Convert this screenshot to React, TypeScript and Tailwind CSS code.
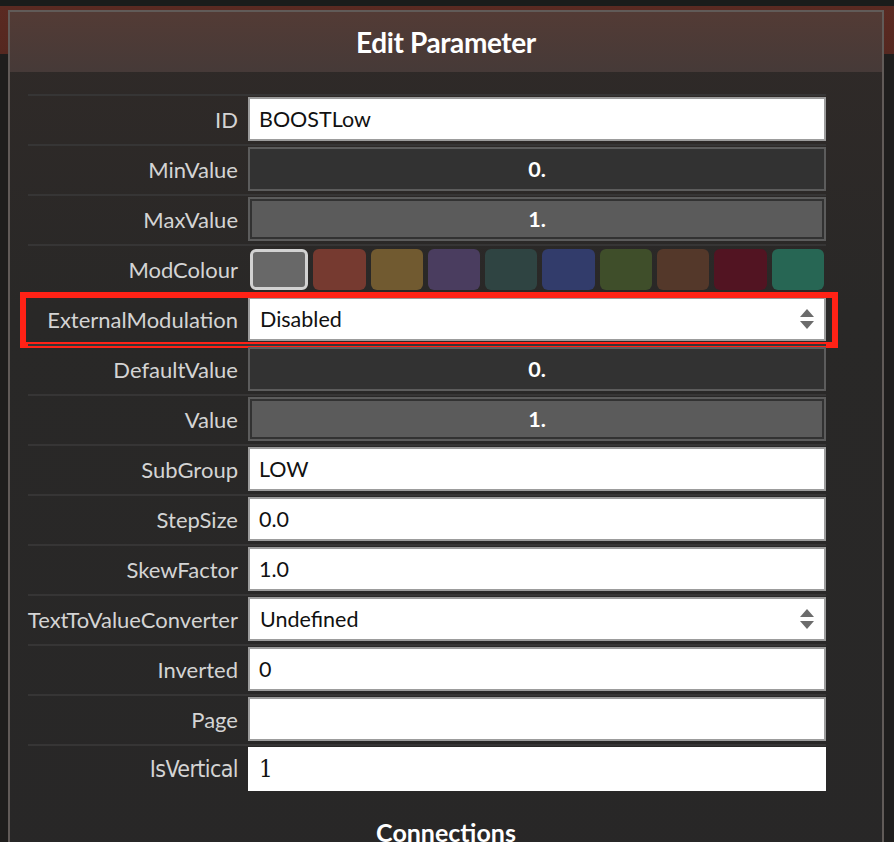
import React from 'react';

type Row =
  | { label: string; kind: 'text'; value: string; plain?: boolean }
  | { label: string; kind: 'slider'; value: string; filled: boolean }
  | { label: string; kind: 'colours' }
  | { label: string; kind: 'select'; value: string; marked?: boolean };

const ROWS: Row[] = [
  { label: 'ID', kind: 'text', value: 'BOOSTLow' },
  { label: 'MinValue', kind: 'slider', value: '0.', filled: false },
  { label: 'MaxValue', kind: 'slider', value: '1.', filled: true },
  { label: 'ModColour', kind: 'colours' },
  { label: 'ExternalModulation', kind: 'select', value: 'Disabled', marked: true },
  { label: 'DefaultValue', kind: 'slider', value: '0.', filled: false },
  { label: 'Value', kind: 'slider', value: '1.', filled: true },
  { label: 'SubGroup', kind: 'text', value: 'LOW' },
  { label: 'StepSize', kind: 'text', value: '0.0' },
  { label: 'SkewFactor', kind: 'text', value: '1.0' },
  { label: 'TextToValueConverter', kind: 'select', value: 'Undefined' },
  { label: 'Inverted', kind: 'text', value: '0' },
  { label: 'Page', kind: 'text', value: '' },
  { label: 'IsVertical', kind: 'text', value: '1', plain: true },
];

const SWATCHES = [
  'bg-[#686868]',
  'bg-[#763a30]',
  'bg-[#715a30]',
  'bg-[#4a3d5f]',
  'bg-[#2f4442]',
  'bg-[#323c6b]',
  'bg-[#3f4e2a]',
  'bg-[#54382a]',
  'bg-[#521422]',
  'bg-[#276654]',
];

function Arrows() {
  return (
    <svg width="16" height="22" viewBox="0 0 16 22" className="shrink-0">
      <polygon points="8,1 15,9 1,9" fill="#6b6b6b" />
      <polygon points="1,13 15,13 8,21" fill="#6b6b6b" />
    </svg>
  );
}

function Field({ row }: { row: Row }) {
  if (row.kind === 'text') {
    return (
      <div
        className={`flex h-[44px] flex-1 items-center bg-white pl-[9px] text-[21.5px] text-[#111] ${
          row.plain ? '' : 'border-2 border-[#9c9c9c]'
        }`}
      >
        {row.plain ? (
          <span className="pl-[2px] font-['DejaVu_Serif_Condensed','DejaVu_Serif',serif] text-[24px]">{row.value}</span>
        ) : (
          row.value
        )}
      </div>
    );
  }
  if (row.kind === 'slider') {
    return (
      <div className="flex h-[44px] flex-1 border-2 border-[#5c5c5c] bg-[#323232] p-[2px]">
        <div
          className={`flex flex-1 items-center justify-center text-[21.5px] font-bold text-white ${
            row.filled ? 'bg-[#5b5b5b]' : ''
          }`}
        >
          {row.value}
        </div>
      </div>
    );
  }
  if (row.kind === 'colours') {
    return (
      <div className="flex h-[44px] flex-1 items-center gap-[5px] px-[2px]">
        {SWATCHES.map((c, i) => (
          <div
            key={c}
            className={`h-[41px] flex-1 rounded-[6px] ${c} ${i === 0 ? 'border-[3px] border-[#d2d2d2]' : ''}`}
          />
        ))}
      </div>
    );
  }
  return (
    <div className="flex h-[44px] flex-1 items-center justify-between border-2 border-[#9c9c9c] bg-white pl-[10px] pr-[9px] text-[21.5px] text-[#111]">
      <span>{row.value}</span>
      <Arrows />
    </div>
  );
}

export default function App() {
  return (
    <div className="h-[842px] w-[894px] overflow-hidden bg-[linear-gradient(to_bottom,#1a1c1b_0,#1a1c1b_6px,#5a2a22_6px,#552820_54px,#1f1e1d_54px)] pl-[8px] pt-[10px] font-['Lato','Noto_Sans',sans-serif]">
      <div className="h-[900px] w-[876px] border-2 border-b-0 border-[#615b58] bg-[linear-gradient(to_bottom,#302a28,#292827_300px,#282727)]">
        <div className="flex h-[60px] items-center justify-center bg-[linear-gradient(to_bottom,#533b35,#463a38)]">
          <h1 className="text-[28px] font-bold tracking-[-0.4px] text-white">Edit Parameter</h1>
        </div>

        <div className="pl-[18px] pt-[22px]">
          {ROWS.map((row) => (
            <div key={row.label} className="relative flex h-[50px] w-[798px] items-start border-t-2 border-[#363535] pt-[1px]">
              {row.kind === 'select' && row.marked && (
                <div className="pointer-events-none absolute left-[-8px] top-[-4px] h-[56px] w-[818px] border-[6px] border-[#ff2216]" />
              )}
              <div className="flex h-[44px] w-[220px] shrink-0 items-center justify-end pr-[10px] text-[22px] text-[#d4d4d4]">
                {row.label === 'IsVertical' ? (
                  <span className="font-['DejaVu_Sans_Condensed','DejaVu_Sans',sans-serif] text-[23px] tracking-[-0.6px]">
                    {row.label}
                  </span>
                ) : (
                  row.label
                )}
              </div>
              <Field row={row} />
            </div>
          ))}
        </div>

        <div className="pt-[22px] text-center text-[25px] font-bold leading-[32px] text-white">Connections</div>
      </div>
    </div>
  );
}
